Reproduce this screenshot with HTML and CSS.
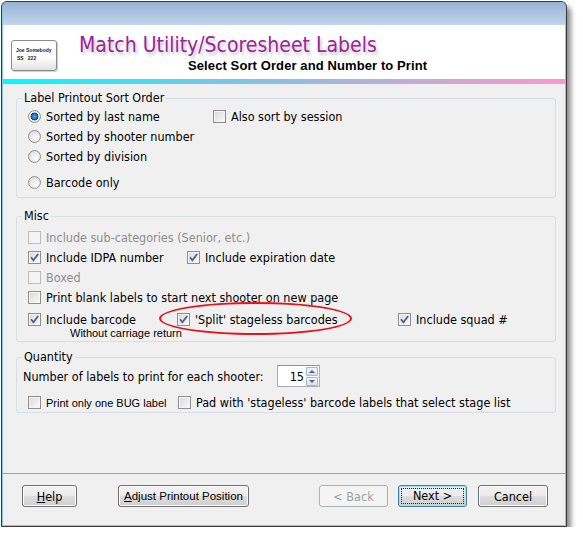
FILE: index.html
```html
<!DOCTYPE html>
<html lang="en">
<head>
    <meta charset="UTF-8">
    <title>Match Utility/Scoresheet Labels</title>
    <link rel="stylesheet" href="styles.css">
</head>
<body>
    <div class="window">
        <div class="titlebar"></div>

        <header class="header">
            <div class="logo">
                <div class="logo-name">Joe Somebody</div>
                <div class="logo-id">SS&nbsp;&nbsp;&nbsp;222</div>
            </div>
            <div class="heading">
                <h1 class="title">Match Utility/Scoresheet Labels</h1>
                <h2 class="subtitle">Select Sort Order and Number to Print</h2>
            </div>
        </header>
        <div class="strip"></div>

        <div class="content">
            <fieldset class="group group-sort">
                <legend>Label Printout Sort Order</legend>
                <div class="row">
                    <label class="opt col-sort"><span class="radio on"></span>Sorted by last name</label>
                    <label class="opt"><span class="check"></span>Also sort by session</label>
                </div>
                <div class="row">
                    <label class="opt"><span class="radio"></span>Sorted by shooter number</label>
                </div>
                <div class="row">
                    <label class="opt"><span class="radio"></span>Sorted by division</label>
                </div>
                <div class="row row-gap">
                    <label class="opt"><span class="radio"></span>Barcode only</label>
                </div>
            </fieldset>

            <fieldset class="group group-misc">
                <legend>Misc</legend>
                <div class="row">
                    <label class="opt disabled"><span class="check"></span>Include sub-categories (Senior, etc.)</label>
                </div>
                <div class="row">
                    <label class="opt col-idpa"><span class="check on"><svg viewBox="0 0 11 11"><path d="M2 5.2 L4.4 8.2 L9.2 2"/></svg></span>Include IDPA number</label>
                    <label class="opt"><span class="check on"><svg viewBox="0 0 11 11"><path d="M2 5.2 L4.4 8.2 L9.2 2"/></svg></span>Include expiration date</label>
                </div>
                <div class="row">
                    <label class="opt disabled"><span class="check"></span>Boxed</label>
                </div>
                <div class="row">
                    <label class="opt"><span class="check"></span>Print blank labels to start next shooter on new page</label>
                </div>
                <div class="row row-barcode">
                    <label class="opt col-barcode"><span class="check on"><svg viewBox="0 0 11 11"><path d="M2 5.2 L4.4 8.2 L9.2 2"/></svg></span>Include barcode</label>
                    <label class="opt col-split"><span class="check on"><svg viewBox="0 0 11 11"><path d="M2 5.2 L4.4 8.2 L9.2 2"/></svg></span>'Split' stageless barcodes</label>
                    <label class="opt"><span class="check on"><svg viewBox="0 0 11 11"><path d="M2 5.2 L4.4 8.2 L9.2 2"/></svg></span>Include squad #</label>
                    <div class="mark"></div>
                </div>
                <div class="note">Without carriage return</div>
            </fieldset>

            <fieldset class="group group-qty">
                <legend>Quantity</legend>
                <div class="row row-count">
                    <span>Number of labels to print for each shooter:</span>
                    <div class="spin">
                        <span class="spin-value">15</span>
                        <div class="spin-buttons">
                            <span class="spin-btn up"></span>
                            <span class="spin-btn down"></span>
                        </div>
                    </div>
                </div>
                <div class="row row-pad">
                    <label class="opt small col-bug"><span class="check"></span>Print only one BUG label</label>
                    <label class="opt"><span class="check"></span>Pad with 'stageless' barcode labels that select stage list</label>
                </div>
            </fieldset>
        </div>

        <footer class="footer">
            <button class="btn btn-help"><u>H</u>elp</button>
            <button class="btn btn-adjust"><u>A</u>djust Printout Position</button>
            <button class="btn btn-back" disabled>&lt; Back</button>
            <button class="btn btn-next"><span class="focus">Next &gt;</span></button>
            <button class="btn btn-cancel">Cancel</button>
        </footer>
    </div>
</body>
</html>
```

FILE: styles.css
```css
body {
    margin: 0;
    padding: 1px 0 0 1px;
    background: #ffffff;
    font-family: "DejaVu Sans Condensed", "DejaVu Sans", sans-serif;
    font-stretch: condensed;
    font-size: 12.5px;
    color: #000;
}

/* Fensterrahmen */
.window {
    width: 562px;
    height: 523px;
    padding: 0 1px 1px;
    border: 1px solid #3c3c3c;
    border-radius: 6px 6px 0 0;
    background: #7fcbe9;
    box-shadow: 4px 5px 5px rgba(0, 0, 0, 0.45);
    display: flex;
    flex-direction: column;
}

.titlebar {
    height: 23px;
    border-radius: 5px 5px 0 0;
    background: linear-gradient(#99b3d5, #c1d6ed);
}

.header {
    height: 54px;
    background: #fff;
    display: flex;
    align-items: flex-start;
}

.logo {
    box-sizing: border-box;
    width: 46px;
    height: 31px;
    margin: 15px 0 0 8px;
    padding: 6px 0 0 4px;
    border: 1px solid #8a8a8a;
    border-radius: 3px;
    background: linear-gradient(#ffffff 55%, #e2e2e2);
    box-shadow: 1px 1px 1px rgba(0, 0, 0, 0.2);
    font-family: "Liberation Sans", sans-serif;
    font-size: 5px;
    line-height: 6px;
    font-weight: bold;
    color: #222;
}

.logo-id {
    margin-top: 2px;
    padding-left: 1px;
}

.heading {
    margin-left: 22px;
    padding-top: 8px;
}

.title {
    margin: 0;
    font-size: 21px;
    line-height: 24px;
    font-weight: normal;
    color: #9c2399;
    text-shadow: 2px 3px 3px rgba(0, 0, 0, 0.22);
}

.subtitle {
    margin: 1px 0 0 109px;
    font-family: "Liberation Sans", sans-serif;
    font-stretch: normal;
    font-size: 13px;
    line-height: 15px;
    letter-spacing: 0.1px;
    font-weight: bold;
}

.strip {
    height: 5px;
    background: linear-gradient(to right, #00fdfd, #6ccbe8 35%, #b2b1d8 65%, #fb98cb);
}

.content {
    flex: 1;
    background: #f0f0f0;
    padding-top: 7px;
}

/* Gruppen */
.group {
    margin: 0 9px 0 13px;
    padding: 1px 0 5px 6px;
    border: 1px solid #d5dfe5;
    border-radius: 3px;
    min-width: 0;
}

.group legend {
    padding: 0 2px;
    margin-left: -1px;
    line-height: 14px;
}

.group-misc {
    margin-top: 11px;
    padding-top: 4px;
    padding-bottom: 3px;
}

.group-qty {
    margin-top: 8px;
    padding-top: 0;
    padding-bottom: 1px;
}

.row {
    height: 20px;
    padding-left: 5px;
    display: flex;
    align-items: center;
}

.row-gap {
    margin-top: 6px;
}

.row-barcode {
    position: relative;
    height: 18px;
    margin-top: 3px;
}

.note {
    padding-left: 47px;
    font-family: "Liberation Sans", sans-serif;
    font-stretch: normal;
    font-size: 11px;
    line-height: 10px;
}

.row-count {
    height: 24px;
    padding-left: 0;
}

.row-pad {
    height: 17px;
    margin-top: 6px;
}

.opt {
    display: inline-flex;
    align-items: center;
    gap: 5px;
    white-space: nowrap;
}

.col-sort { width: 185px; }
.col-idpa { width: 159px; }
.col-barcode { width: 149px; }
.col-split { width: 221px; }
.col-bug { width: 150px; }

.small {
    font-family: "Liberation Sans", sans-serif;
    font-stretch: normal;
    font-size: 11px;
}

.disabled {
    color: #8d8d8d;
}

/* Checkbox und Radio */
.check {
    box-sizing: border-box;
    width: 13px;
    height: 13px;
    flex: none;
    border: 1px solid #8e8f8f;
    background: linear-gradient(135deg, #d8d8d8, #fbfbfb);
    box-shadow: inset 0 0 0 1px #f4f4f4;
    display: flex;
    align-items: center;
    justify-content: center;
}

.check svg {
    width: 11px;
    height: 11px;
    fill: none;
    stroke: #4c5f91;
    stroke-width: 1.8;
}

.disabled .check {
    border-color: #bcbcbc;
    background: #f4f4f4;
}

.radio {
    box-sizing: border-box;
    width: 13px;
    height: 13px;
    flex: none;
    border: 1px solid #8e8f8f;
    border-radius: 50%;
    background: radial-gradient(circle at 60% 65%, #fdfdfd, #d4d4d4);
}

.radio.on {
    background: radial-gradient(circle at 50% 50%, #49b5ee 0, #1f6fb4 2.5px, #153f72 3.6px, #e8e8e8 4.2px, #f8f8f8 6px);
}

/* Zahlenfeld */
.spin {
    box-sizing: border-box;
    width: 43px;
    height: 22px;
    margin-left: 13px;
    border: 1px solid #abadb3;
    border-top-color: #8f949b;
    background: #fff;
    display: flex;
    align-items: center;
}

.spin-value {
    flex: 1;
    padding-left: 12px;
}

.spin-buttons {
    width: 12px;
    margin-right: 1px;
    display: flex;
    flex-direction: column;
    gap: 1px;
}

.spin-btn {
    height: 9px;
    border: 1px solid #a7b6c8;
    border-radius: 1px;
    background: linear-gradient(#f3f7fb, #d5e1ee);
    box-sizing: border-box;
    display: flex;
    align-items: center;
    justify-content: center;
}

.spin-btn::after {
    content: '';
    border-left: 3px solid transparent;
    border-right: 3px solid transparent;
}

.spin-btn.up::after {
    border-bottom: 3px solid #4e6283;
}

.spin-btn.down::after {
    border-top: 3px solid #4e6283;
}

/* rote Markierung */
.mark {
    position: absolute;
    left: 136px;
    top: -8px;
    width: 193px;
    height: 33px;
    box-sizing: border-box;
    border: 2px solid #e3141c;
    border-radius: 50%;
}

/* Buttons */
.footer {
    box-sizing: border-box;
    height: 52px;
    border-top: 1px solid #a0a0a0;
    background: #f0f0f0;
    padding: 11px 17px 0 19px;
    display: flex;
    align-items: flex-start;
}

.btn {
    height: 22px;
    padding: 0;
    border: 1px solid #707070;
    border-radius: 3px;
    background: linear-gradient(#f2f2f2 0, #ebebeb 50%, #dddddd 50%, #cfcfcf 100%);
    box-shadow: inset 0 0 0 1px #fcfcfc;
    font-family: "DejaVu Sans Condensed", "DejaVu Sans", sans-serif;
    font-stretch: condensed;
    font-size: 12.5px;
    color: #000;
}

.btn u {
    text-underline-offset: 1px;
}

.btn-help { width: 55px; }

.btn-adjust {
    width: 131px;
    margin-left: 41px;
    font-family: "Liberation Sans", sans-serif;
    font-stretch: normal;
    font-size: 11.5px;
}

.btn-back {
    width: 69px;
    margin-left: auto;
    border-color: #adb2b5;
    background: #f4f4f4;
    box-shadow: none;
    color: #a0a0a0;
}

.btn-next {
    width: 69px;
    margin-left: 10px;
    padding: 2px;
    border-color: #3c7fb1;
    box-shadow: inset 0 0 0 1px #9fe2f8;
}

.focus {
    display: block;
    height: 100%;
    box-sizing: border-box;
    border: 1px dotted #222;
    line-height: 14px;
}

.btn-cancel {
    width: 70px;
    margin-left: 11px;
}
```
